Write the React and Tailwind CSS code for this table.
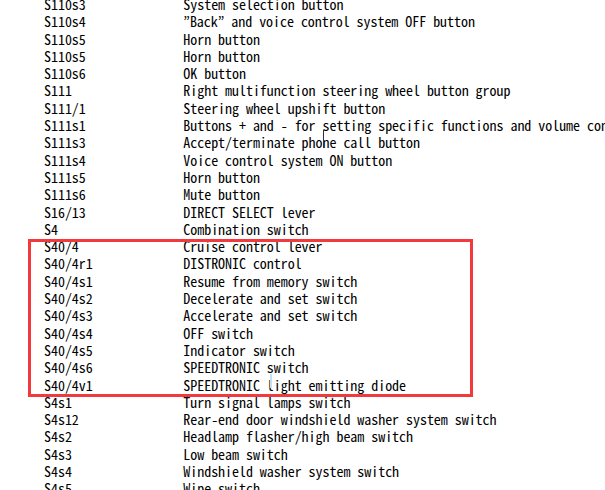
const rows = [
    ["S110s3", "System selection button"],
    ["S110s4", "\u201dBack\u201d and voice control system OFF button"],
    ["S110s5", "Horn button"],
    ["S110s5", "Horn button"],
    ["S110s6", "OK button"],
    ["S111", "Right multifunction steering wheel button group"],
    ["S111/1", "Steering wheel upshift button"],
    ["S111s1", "Buttons + and - for setting specific functions and volume control"],
    ["S111s3", "cursor"],
    ["S111s4", "Voice control system ON button"],
    ["S111s5", "Horn button"],
    ["S111s6", "Mute button"],
    ["S16/13", "DIRECT SELECT lever"],
    ["S4", "Combination switch"],
];

const marked = [
    ["S40/4", "Cruise control lever"],
    ["S40/4r1", "DISTRONIC control"],
    ["S40/4s1", "Resume from memory switch"],
    ["S40/4s2", "Decelerate and set switch"],
    ["S40/4s3", "Accelerate and set switch"],
    ["S40/4s4", "OFF switch"],
    ["S40/4s5", "Indicator switch"],
    ["S40/4s6", "SPEEDTRONIC switch"],
    ["S40/4v1", "light"],
];

const after = [
    ["S4s1", "Turn signal lamps switch"],
    ["S4s12", "Rear-end door windshield washer system switch"],
    ["S4s2", "Headlamp flasher/high beam switch"],
    ["S4s3", "Low beam switch"],
    ["S4s4", "Windshield washer system switch"],
    ["S4s5", "Wipe switch"],
];

function Desc({ text }) {
    if (text === "cursor") {
        return (
            <span>
                Accept/terminate pho
                <span className="relative">
                    <span className="absolute left-0 top-[-2px] h-[18px] w-px bg-[#333]"></span>
                </span>
                ne call button
            </span>
        );
    }
    if (text === "light") {
        return (
            <span>
                SPEEDTRONIC
                <span className="relative">
                    <span className="absolute left-[10px] top-[-1px] h-[14px] w-[2px] bg-[#bfe0f5]"></span>
                </span>
                {" "}light emitting diode
            </span>
        );
    }
    return <span>{text}</span>;
}

function Row({ code, desc }) {
    return (
        <div className="flex h-[17.3px] items-center whitespace-nowrap">
            <div className="w-[139.3px] shrink-0">{code}</div>
            <Desc text={desc} />
        </div>
    );
}

export default function App() {
    return (
        <div
            className="h-[490px] w-[605px] overflow-hidden bg-white text-[14px] leading-[17.3px] tracking-[-0.04px] text-black"
            style={{ fontFamily: '"Noto Sans Mono CJK JP", "Noto Sans CJK JP", "Liberation Mono", monospace' }}
        >
            <div className="-mt-[4px] pl-[44px]">
                {rows.map((r, i) => <Row key={"a" + i} code={r[0]} desc={r[1]} />)}
                <div className="relative">
                    {marked.map((r, i) => <Row key={"b" + i} code={r[0]} desc={r[1]} />)}
                    <div className="absolute left-[-16px] top-[1px] h-[158px] w-[445px] border-[3px] border-[#f23a3c]"></div>
                </div>
                {after.map((r, i) => <Row key={"c" + i} code={r[0]} desc={r[1]} />)}
            </div>
        </div>
    );
}
